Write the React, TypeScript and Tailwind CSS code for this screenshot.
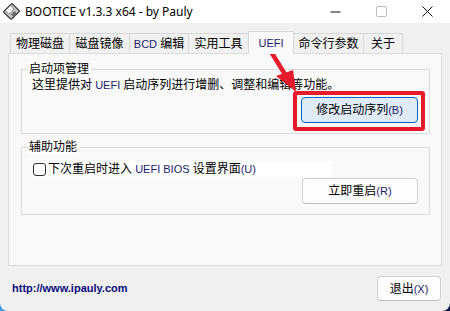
import React from "react";

const cjk = "font-['Noto_Sans','Noto_Sans_CJK_SC',sans-serif]";

// hotkey suffix like (B), drawn in the small tahoma-ish face of the original
function Key({ k }: { k: string }) {
  return (
    <span className="font-['Liberation_Sans',sans-serif] text-[11px] text-[#1c1c6e]">({k})</span>
  );
}

function Latin({ children }: { children: React.ReactNode }) {
  return (
    <span className="font-['Liberation_Sans',sans-serif] text-[11px] text-[#1c1c6e]">{children}</span>
  );
}

const tabs = [
  { label: <>物理磁盘</>, w: "w-[60px]" },
  { label: <>磁盘镜像</>, w: "w-[61px]" },
  { label: <><Latin>BCD</Latin> 编辑</>, w: "w-[60px]" },
  { label: <>实用工具</>, w: "w-[61px]" },
  { label: <Latin>UEFI</Latin>, w: "w-[46px]", active: true },
  { label: <>命令行参数</>, w: "w-[71px]" },
  { label: <>关于</>, w: "w-[40px]" },
];

function WinButton({ children, className }: { children: React.ReactNode; className: string }) {
  return (
    <button
      className={`flex items-center justify-center rounded-[4px] border border-[#d0d0d0] border-b-[#bdbdbd] bg-[#fdfdfd] text-[12px] text-black ${className}`}
    >
      <span>{children}</span>
    </button>
  );
}

export default function App() {
  return (
    <div className="relative h-[311px] w-[450px] overflow-hidden bg-gradient-to-r from-[#3d9be6] to-[#0f1848]">
      <div className={`flex h-full w-full flex-col rounded-b-[8px] bg-[#f0f0f0] ${cjk} select-none`}>
        {/* title bar */}
        <div className="flex h-[23px] items-center bg-white">
          <svg className="ml-[3px] h-[17px] w-[17px]" viewBox="0 0 17 17">
            <g transform="rotate(-45 8.5 8.5)">
              <rect x="2.5" y="3" width="12" height="11" rx="1" fill="#c4c4c4" stroke="#2d2d2d" strokeWidth="1.2" />
              <rect x="5" y="3.6" width="7" height="4.8" fill="#fff" stroke="#5a5a5a" strokeWidth="0.6" />
              <rect x="6" y="10.2" width="5" height="3.2" fill="#6a6a6a" />
            </g>
          </svg>
          <span className="ml-[5px] text-[12px] leading-none text-black">BOOTICE v1.3.3 x64 - by Pauly</span>
          <div className="ml-auto flex h-full">
            <div className="flex w-[46px] items-center justify-center">
              <svg width="11" height="11" viewBox="0 0 11 11">
                <line x1="0.5" y1="6" x2="10.5" y2="6" stroke="#111" strokeWidth="1" />
              </svg>
            </div>
            <div className="flex w-[46px] items-center justify-center">
              <svg width="11" height="11" viewBox="0 0 11 11">
                <rect x="0.5" y="0.5" width="10" height="10" rx="1.5" fill="none" stroke="#bdbdbd" strokeWidth="1" />
              </svg>
            </div>
            <div className="flex w-[46px] items-center justify-center">
              <svg width="11" height="11" viewBox="0 0 11 11">
                <path d="M0.5 0.5 L10.5 10.5 M10.5 0.5 L0.5 10.5" stroke="#111" strokeWidth="1" />
              </svg>
            </div>
          </div>
        </div>

        {/* tabs */}
        <div className="mt-[8px] flex h-[22px] items-end pl-[10px]">
          {tabs.map((t, i) => (
            <div
              key={i}
              className={`${t.w} ${i > 0 ? "-ml-px" : ""} flex items-center justify-center border border-b-0 border-[#d9d9d9] text-[12px] leading-none text-black ${
                t.active ? "relative z-10 -mb-px h-[23px] bg-[#f9f9f9]" : "h-[20px] bg-[#f0f0f0]"
              }`}
            >
              <span>{t.label}</span>
            </div>
          ))}
        </div>

        {/* tab panel */}
        <div className="mx-[8px] h-[213px] border border-[#dcdcdc] bg-[#f9f9f9]">
          <fieldset className="ml-[12px] mt-[8px] w-[409px] border border-[#dcdcdc]">
            <legend className="ml-[7px] bg-white pr-[2px] text-[12px] leading-[14px] text-black">启动项管理</legend>
            <div className="pl-[10px] pt-[1px] text-[12px] leading-[16px] text-black">
              这里提供对 <Latin>UEFI</Latin> 启动序列进行增删、调整和编辑等功能。
            </div>
            <div className="mt-[4px] flex justify-end pb-[10px] pr-[11px]">
              <div className="relative">
                <button className="flex h-[26px] w-[117px] items-center justify-center rounded-[4px] border border-[#0067c0] bg-[#dfebf7] text-[12px] text-black">
                  <span>修改启动序列<Key k="B" /></span>
                </button>
                <div className="pointer-events-none absolute -bottom-[8px] -left-[8px] -right-[7px] -top-[6px] rounded-[3px] border-[4px] border-[#e51b2b]" />
              </div>
            </div>
          </fieldset>

          <fieldset className="ml-[12px] mt-[6px] w-[409px] border border-[#dcdcdc]">
            <legend className="ml-[7px] bg-white pr-[2px] text-[12px] leading-[14px] text-black">辅助功能</legend>
            <div className="pl-[10px] pt-[7px]">
              <label className="flex h-[16px] w-[300px] items-center bg-white text-[12px] text-black">
                <span className="ml-[1px] mr-[2px] h-[13px] w-[13px] shrink-0 rounded-[3px] border border-[#333] bg-white" />
                <span>
                  下次重启时进入 <Latin>UEFI BIOS</Latin> 设置界面<Key k="U" />
                </span>
              </label>
            </div>
            <div className="mt-[1px] flex justify-end pb-[10px] pr-[11px]">
              <WinButton className="h-[26px] w-[116px]">
                立即重启<Key k="R" />
              </WinButton>
            </div>
          </fieldset>
        </div>

        {/* footer */}
        <div className="flex flex-1 items-center justify-between pl-[12px] pr-[9px]">
          <span className="font-['Liberation_Sans',sans-serif] text-[11px] font-bold text-[#0a0a7a]">http://www.ipauly.com</span>
          <WinButton className="h-[25px] w-[64px]">
            退出<Key k="X" />
          </WinButton>
        </div>
      </div>

      {/* red annotation arrow */}
      <svg className="pointer-events-none absolute left-0 top-0" width="450" height="311" viewBox="0 0 450 311">
        <line x1="270" y1="50" x2="286" y2="76" stroke="#e51b2b" strokeWidth="4.5" strokeLinecap="round" />
        <polygon points="296,92 276,76 293,70" fill="#e51b2b" />
      </svg>
    </div>
  );
}
